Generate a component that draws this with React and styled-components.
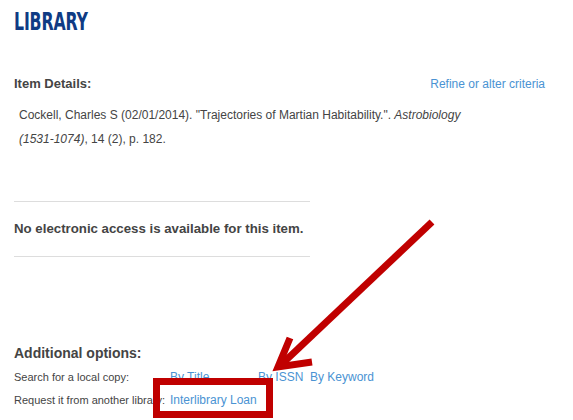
import React from "react";
import styled, { createGlobalStyle } from "styled-components";

const GlobalStyle = createGlobalStyle`
  html, body {
    margin: 0;
    padding: 0;
    background: #fff;
  }
  body {
    font-family: "Liberation Sans", Arial, sans-serif;
    color: #444;
  }
`;

const searchLinks = [
  { label: "By Title" },
  { label: "By ISSN" },
  { label: "By Keyword" },
];

const App = () => {
  return (
    <>
      <GlobalStyle />
      <Page>
        <Title>LIBRARY</Title>

        <DetailsHead>
          <Heading>Item Details:</Heading>
          <Link href="#">Refine or alter criteria</Link>
        </DetailsHead>
        <Citation>
          Cockell, Charles S (02/01/2014). "Trajectories of Martian
          Habitability.". <em>Astrobiology (1531-1074)</em>, 14 (2), p. 182.
        </Citation>

        <Access>No electronic access is available for this item.</Access>

        <Options>
          <OptionsTitle>Additional options:</OptionsTitle>
          <OptionGrid>
            <Label>Search for a local copy:</Label>
            {searchLinks.map((l) => (
              <SmallLink key={l.label} href="#">
                {l.label}
              </SmallLink>
            ))}
            <Label>Request it from another library:</Label>
            <SmallLink href="#" style={{ gridColumn: "2 / span 3" }}>
              Interlibrary Loan
            </SmallLink>
          </OptionGrid>
        </Options>

        <Markup width="573" height="420" viewBox="0 0 573 420">
          <path
            d="M432 222 L283 363"
            stroke="#c00000"
            strokeWidth="7"
            fill="none"
          />
          <path
            d="M290 338 L278 367 L312 362"
            stroke="#c00000"
            strokeWidth="7"
            fill="none"
            strokeLinejoin="miter"
          />
          <rect
            x="156.5"
            y="381.5"
            width="113"
            height="33"
            stroke="#c00000"
            strokeWidth="7"
            fill="none"
          />
        </Markup>
      </Page>
    </>
  );
};

const Page = styled.div`
  position: relative;
  width: 573px;
  height: 420px;
  overflow: hidden;
  padding: 0 14px;
  box-sizing: border-box;
`;

const Title = styled.h1`
  margin: 0;
  padding-top: 9px;
  font-family: "Liberation Sans Narrow", "DejaVu Sans Condensed", sans-serif;
  font-weight: 700;
  font-size: 25px;
  line-height: 26px;
  color: #0f3b84;
  display: inline-block;
  transform: scaleX(0.7);
  transform-origin: left;
  letter-spacing: -0.2px;
`;

const DetailsHead = styled.div`
  display: flex;
  justify-content: space-between;
  align-items: baseline;
  margin-top: 41px;
  padding-right: 14px;
`;

const Heading = styled.h2`
  margin: 0;
  font-size: 13px;
  font-weight: 700;
  color: #444;
`;

const Link = styled.a`
  font-size: 12px;
  color: #4a93d3;
  text-decoration: none;
`;

const Citation = styled.p`
  margin: 12px 0 0 5px;
  font-size: 12px;
  line-height: 24px;
  color: #444;
  width: 470px;
`;

const Access = styled.div`
  margin-top: 50px;
  width: 296px;
  border-top: 1px solid #ddd;
  border-bottom: 1px solid #ddd;
  padding: 19px 0 20px;
  font-size: 13.25px;
  font-weight: 700;
  color: #444;
`;

const Options = styled.section`
  margin-top: 88px;
`;

const OptionsTitle = styled.h3`
  margin: 0;
  font-size: 14px;
  font-weight: 700;
  color: #444;
`;

const OptionGrid = styled.div`
  display: grid;
  grid-template-columns: 156px 88px 52px auto;
  grid-auto-rows: 23px;
  align-items: center;
  margin-top: 4px;
`;

const Label = styled.span`
  font-size: 11px;
  color: #444;
  white-space: nowrap;
`;

const SmallLink = styled.a`
  font-size: 12px;
  color: #4a93d3;
  text-decoration: none;
  white-space: nowrap;
`;

const Markup = styled.svg`
  position: absolute;
  top: 0;
  left: 0;
  pointer-events: none;
`;

export default App;
